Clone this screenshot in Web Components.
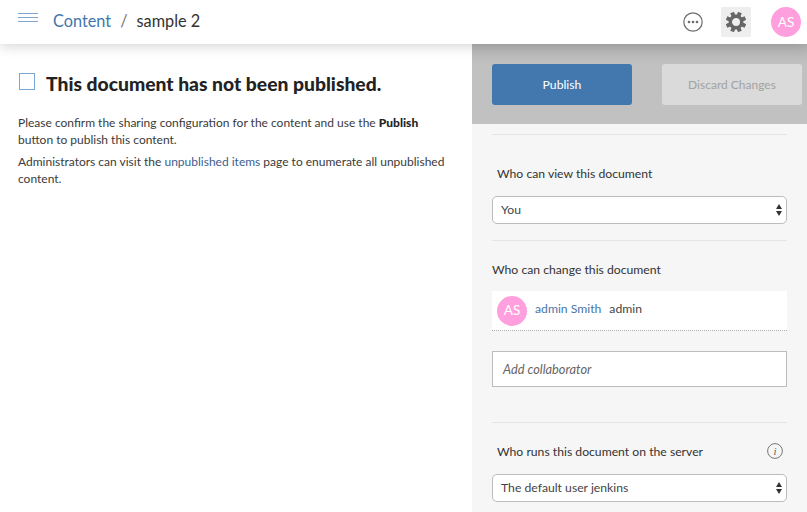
<!DOCTYPE html>
<html lang="en">
<head>
  <meta charset="UTF-8">
  <title>sample 2</title>
  <style>
    html, body { margin: 0; height: 512px; overflow: hidden; background: #fff; }
    body { font-family: "Lato", "Noto Sans", sans-serif; color: #333; }
  </style>
</head>
<body>
  <template id="avatar-tpl">
    <style>
      :host { display: flex; align-items: center; justify-content: center; width: 30px; height: 30px; border-radius: 50%; background: #ff9fdd; color: #fff; font-size: 13.5px; flex: none; }
      span { margin-top: -1px; }
    </style>
    <span><slot></slot></span>
  </template>

  <template id="top-bar-tpl">
    <style>
      :host { display: flex; align-items: center; height: 44px; background: #fff; position: relative; z-index: 2; box-shadow: 0 2px 12px rgba(0,0,0,.18); font-size: 16.3px; }
      .menu { margin-left: 18px; width: 20px; height: 7px; border-top: 1px solid #7fa5cc; border-bottom: 1px solid #7fa5cc; position: relative; margin-top: -9px; }
      .menu::after { content: ""; position: absolute; left: 0; right: 0; top: 3px; height: 1px; background: #7fa5cc; }
      .crumbs { margin-left: 15px; margin-top: -4px; display: flex; }
      .crumbs a { color: #4277ad; }
      .crumbs i { font-style: normal; color: #777; margin: 0 9px; }
      .tools { margin-left: auto; display: flex; align-items: center; }
      .gear { width: 30px; height: 30px; background: #eee; display: flex; align-items: center; justify-content: center; margin: 0 20px 0 18px; }
      svg { display: block; }
      x-avatar { margin-right: 6px; }
    </style>
    <div class="menu"></div>
    <div class="crumbs"><a>Content</a><i>/</i><span>sample 2</span></div>
    <div class="tools">
      <svg width="20" height="20" viewBox="0 0 20 20"><circle cx="10" cy="10" r="9.2" fill="none" stroke="#6b6b6b" stroke-width="1.2"/><circle cx="6" cy="10" r="1.3" fill="#6b6b6b"/><circle cx="10" cy="10" r="1.3" fill="#6b6b6b"/><circle cx="14" cy="10" r="1.3" fill="#6b6b6b"/></svg>
      <div class="gear">
        <svg width="20" height="20" viewBox="0 0 20 20">
          <circle cx="10" cy="10" r="5.7" fill="none" stroke="#666" stroke-width="3.4"/>
          <g fill="#666" transform="rotate(22.5 10 10)">
            <rect x="8" y="-0.2" width="4" height="4"/>
            <rect x="8" y="-0.2" width="4" height="4" transform="rotate(45 10 10)"/>
            <rect x="8" y="-0.2" width="4" height="4" transform="rotate(90 10 10)"/>
            <rect x="8" y="-0.2" width="4" height="4" transform="rotate(135 10 10)"/>
            <rect x="8" y="-0.2" width="4" height="4" transform="rotate(180 10 10)"/>
            <rect x="8" y="-0.2" width="4" height="4" transform="rotate(225 10 10)"/>
            <rect x="8" y="-0.2" width="4" height="4" transform="rotate(270 10 10)"/>
            <rect x="8" y="-0.2" width="4" height="4" transform="rotate(315 10 10)"/>
          </g>
        </svg>
      </div>
      <x-avatar>AS</x-avatar>
    </div>
  </template>

  <template id="notice-tpl">
    <style>
      :host { display: block; padding: 29px 20px 0 18px; font-size: 12px; line-height: 17px; color: #3a3a3a; }
      .head { display: flex; align-items: center; }
      .box { width: 14px; height: 15px; border: 1px solid #7ba7d6; margin: -7px 11px 0 1px; flex: none; }
      h1 { margin: -1px 0 0; font-size: 19.3px; line-height: 24px; font-weight: 900; color: #222; white-space: nowrap; }
      p { margin: 0 0 5px; }
      .body { margin-top: 18px; }
      a { color: #3a5f90; }
      b { color: #222; font-weight: 900; }
    </style>
    <div class="head"><div class="box"></div><h1>This document has not been published.</h1></div>
    <div class="body">
      <p>Please confirm the sharing configuration for the content and use the <b>Publish</b> button to publish this content.</p>
      <p>Administrators can visit the <a>unpublished items</a> page to enumerate all unpublished content.</p>
    </div>
  </template>

  <template id="action-button-tpl">
    <style>
      :host { display: flex; align-items: center; justify-content: center; width: 140px; height: 41px; border-radius: 3px; font-size: 12.2px; background: #4378ae; color: #fff; flex: none; }
      :host([disabled]) { background: #dadada; color: #a2a2a2; font-size: 12px; }
    </style>
    <slot></slot>
  </template>

  <template id="select-box-tpl">
    <style>
      :host { display: flex; align-items: center; height: 24px; border: 1px solid #bcbcbc; border-radius: 5px; background: #fff; padding: 0 0 2px 8px; font-size: 12.2px; color: #444; position: relative; }
      svg { position: absolute; right: 4px; top: 7px; }
    </style>
    <slot></slot>
    <svg width="6" height="12" viewBox="0 0 6 12"><path fill="#333" d="M3 0l3 5H0zM0 7h6l-3 5z"/></svg>
  </template>

  <template id="collab-row-tpl">
    <style>
      :host { display: flex; align-items: center; height: 39px; background: #fff; border-bottom: 1px dotted #aaa; padding-left: 5px; font-size: 12.2px; }
      a { color: #4a74a8; margin: -4px 0 0 8px; }
      span { margin: -4px 0 0 8px; color: #444; }
    </style>
    <x-avatar>AS</x-avatar><a>admin Smith</a><span>admin</span>
  </template>

  <template id="side-panel-tpl">
    <style>
      :host { display: block; width: 335px; background: #f6f6f6; font-size: 12.2px; color: #333; height: 468px; overflow: hidden; flex: none; }
      .actions { display: flex; gap: 30px; height: 80px; padding: 20px 0 0 20px; box-sizing: border-box; background: linear-gradient(#b5b5b5, #c1c1c1 22px); }
      .sec { margin: 0 20px; }
      hr { border: 0; border-top: 1px solid #e5e5e5; margin: 0; }
      .lbl { line-height: 17px; }
      .inset { padding-left: 5px; }
      .input { height: 34px; border: 1px solid #bcbcbc; background: #fff; display: flex; align-items: center; padding-left: 10px; font-style: italic; color: #666; font-size: 12.8px; }
      .runs { display: flex; justify-content: space-between; align-items: center; }
      .runs svg { margin: -2px 4px 0 0; }
    </style>
    <div class="actions">
      <action-button>Publish</action-button>
      <action-button disabled>Discard Changes</action-button>
    </div>
    <div class="sec">
      <hr style="margin-top:10px">
      <div class="lbl inset" style="margin-top:30px">Who can view this document</div>
      <select-box style="margin-top:14px">You</select-box>
      <hr style="margin-top:16px">
      <div class="lbl" style="margin-top:20px">Who can change this document</div>
      <collab-row style="margin-top:13px"></collab-row>
      <div class="input" style="margin-top:20px">Add collaborator</div>
      <hr style="margin-top:35px">
      <div class="lbl inset runs" style="margin-top:20px">Who runs this document on the server
        <svg width="16" height="16" viewBox="0 0 16 16"><circle cx="8" cy="8" r="7.4" fill="none" stroke="#777"/><text x="8" y="11.5" text-anchor="middle" font-family="Liberation Serif" font-style="italic" font-size="11" fill="#666">i</text></svg>
      </div>
      <select-box style="margin-top:14px">The default user jenkins</select-box>
    </div>
  </template>

  <template id="app-shell-tpl">
    <style>
      :host { display: block; height: 512px; overflow: hidden; }
      .main { display: flex; }
      notice-pane { flex: 1; }
    </style>
    <top-bar></top-bar>
    <div class="main"><notice-pane></notice-pane><side-panel></side-panel></div>
  </template>

  <app-shell></app-shell>

  <script>
    // every element is just a template stamped in its own shadow root
    const defs = {
      'x-avatar': 'avatar-tpl',
      'top-bar': 'top-bar-tpl',
      'notice-pane': 'notice-tpl',
      'action-button': 'action-button-tpl',
      'select-box': 'select-box-tpl',
      'collab-row': 'collab-row-tpl',
      'side-panel': 'side-panel-tpl',
      'app-shell': 'app-shell-tpl'
    };
    for (const [name, tpl] of Object.entries(defs)) {
      customElements.define(name, class extends HTMLElement {
        connectedCallback() {
          if (this.shadowRoot) return;
          this.attachShadow({mode: 'open'});
          this.shadowRoot.append(document.getElementById(tpl).content.cloneNode(true));
        }
      });
    }
  </script>
</body>
</html>
